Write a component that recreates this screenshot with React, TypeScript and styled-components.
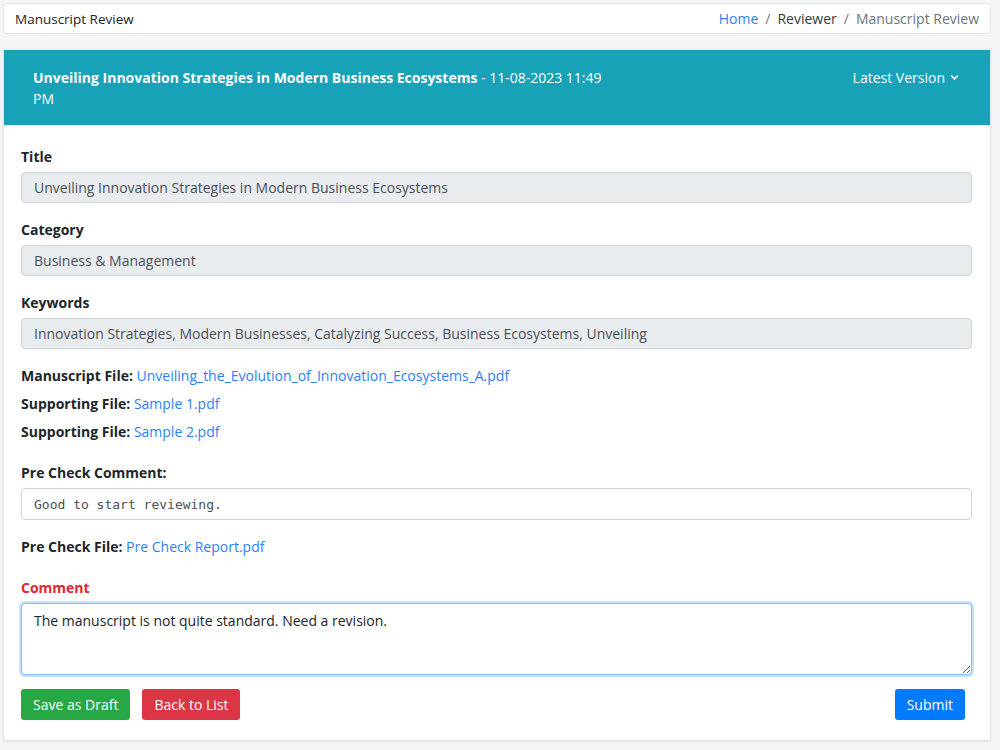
import React from "react";
import styled, { createGlobalStyle } from "styled-components";
import { ChevronDown } from "lucide-react";

const GlobalStyle = createGlobalStyle`
  * { box-sizing: border-box; }
  body {
    margin: 0;
    background: #f4f5f7;
    font-family: "Open Sans", "Noto Sans", sans-serif;
    font-size: 14px;
    color: #212529;
  }
`;

const Page = styled("div")`
  padding: 3px 9px 10px 3px;
  display: flex;
  flex-direction: column;
  gap: 15px;
`;

const TopBar = styled("div")`
  display: flex;
  align-items: center;
  justify-content: space-between;
  height: 31px;
  padding: 0 11px 0 11px;
  background: #fff;
  border: 1px solid #e5e7eb;
  border-radius: 4px;
`;

const PageTitle = styled("span")`
  font-size: 13.5px;
  color: #212529;
`;

const Crumbs = styled("nav")`
  display: flex;
  align-items: center;
  gap: 7px;
  font-size: 14px;
  color: #6c757d;
`;

const Crumb = styled("span")<{ kind: "link" | "strong" | "plain" }>`
  color: ${({ kind }) =>
    kind === "link" ? "#2d7ff9" : kind === "strong" ? "#343a40" : "#6c757d"};
`;

const Card = styled("div")`
  background: #fff;
  border: 1px solid #e3e6ea;
  box-shadow: 0 1px 2px rgba(0, 0, 0, 0.08);
`;

const CardHeader = styled("div")`
  display: flex;
  justify-content: space-between;
  align-items: flex-start;
  background: #17a2b8;
  color: #fff;
  padding: 17px 30px 16px 29px;
  font-size: 14px;
  line-height: 21px;
`;

const HeaderTitle = styled("div")`
  max-width: 590px;
  b {
    font-weight: 700;
  }
`;

const VersionToggle = styled("div")`
  display: flex;
  align-items: center;
  gap: 4px;
  white-space: nowrap;
`;

const CardBody = styled("div")`
  padding: 21px 18px 20px 17px;
  display: flex;
  flex-direction: column;
`;

const Field = styled("div")`
  display: flex;
  flex-direction: column;
  gap: 5px;
  margin-bottom: 16px;
`;

const Label = styled("label")<{ danger?: boolean }>`
  font-weight: 700;
  font-size: 14px;
  line-height: 21px;
  color: ${({ danger }) => (danger ? "#e3262f" : "#212529")};
`;

const ReadOnlyInput = styled("div")<{ mono?: boolean; plain?: boolean }>`
  height: ${({ plain }) => (plain ? "32px" : "31px")};
  display: flex;
  align-items: center;
  padding: 0 12px;
  border: 1px solid #ced4da;
  border-radius: 4px;
  background: ${({ plain }) => (plain ? "#fff" : "#e9ecef")};
  color: #495057;
  font-family: ${({ mono }) =>
    mono ? '"DejaVu Sans Mono", "Liberation Mono", monospace' : "inherit"};
  font-size: ${({ mono }) => (mono ? "13px" : "14px")};
`;

const FileList = styled("div")`
  display: flex;
  flex-direction: column;
  gap: 7px;
  margin: 0 0 20px;
`;

const FileRow = styled("div")`
  line-height: 21px;
  font-size: 14px;
  b {
    font-weight: 700;
  }
  a {
    color: #2d7ff9;
    text-decoration: none;
  }
`;

const CommentBox = styled("textarea")`
  height: 72px;
  padding: 7px 12px 5px;
  border: 1px solid #80bdff;
  border-radius: 4px;
  box-shadow: 0 0 0 2px rgba(128, 189, 255, 0.45);
  font-family: inherit;
  font-size: 14px;
  color: #212529;
  outline: none;
  resize: vertical;
`;

const Actions = styled("div")`
  display: flex;
  align-items: center;
  gap: 12px;
  margin-top: -2px;
  padding-right: 7px;
`;

const Spacer = styled("div")`
  flex: 1;
`;

const Button = styled("button")<{ tone: "success" | "danger" | "primary" }>`
  height: 31px;
  padding: 0 12px;
  border: none;
  border-radius: 3px;
  font-family: inherit;
  font-size: 14px;
  color: #fff;
  background: ${({ tone }) =>
    tone === "success" ? "#28a745" : tone === "danger" ? "#dc3545" : "#007bff"};
  cursor: pointer;
`;

function App() {
  return (
    <Page>
      <GlobalStyle />
      <TopBar>
        <PageTitle>Manuscript Review</PageTitle>
        <Crumbs>
          <Crumb kind="link">Home</Crumb>
          <span>/</span>
          <Crumb kind="strong">Reviewer</Crumb>
          <span>/</span>
          <Crumb kind="plain">Manuscript Review</Crumb>
        </Crumbs>
      </TopBar>
      <Card>
        <CardHeader>
          <HeaderTitle>
            <b>Unveiling Innovation Strategies in Modern Business Ecosystems</b> - 11-08-2023 11:49 PM
          </HeaderTitle>
          <VersionToggle>
            Latest Version <ChevronDown size={11} strokeWidth={3.5} />
          </VersionToggle>
        </CardHeader>
        <CardBody>
          <Field>
            <Label>Title</Label>
            <ReadOnlyInput>Unveiling Innovation Strategies in Modern Business Ecosystems</ReadOnlyInput>
          </Field>
          <Field>
            <Label>Category</Label>
            <ReadOnlyInput>Business &amp; Management</ReadOnlyInput>
          </Field>
          <Field>
            <Label>Keywords</Label>
            <ReadOnlyInput>
              Innovation Strategies, Modern Businesses, Catalyzing Success, Business Ecosystems, Unveiling
            </ReadOnlyInput>
          </Field>
          <FileList>
            <FileRow>
              <b>Manuscript File:</b> <a href="#">Unveiling_the_Evolution_of_Innovation_Ecosystems_A.pdf</a>
            </FileRow>
            <FileRow>
              <b>Supporting File:</b> <a href="#">Sample 1.pdf</a>
            </FileRow>
            <FileRow>
              <b>Supporting File:</b> <a href="#">Sample 2.pdf</a>
            </FileRow>
          </FileList>
          <Field>
            <Label>Pre Check Comment:</Label>
            <ReadOnlyInput mono plain>Good to start reviewing.</ReadOnlyInput>
          </Field>
          <FileList>
            <FileRow>
              <b>Pre Check File:</b> <a href="#">Pre Check Report.pdf</a>
            </FileRow>
          </FileList>
          <Field>
            <Label danger>Comment</Label>
            <CommentBox defaultValue="The manuscript is not quite standard. Need a revision." />
          </Field>
          <Actions>
            <Button tone="success">Save as Draft</Button>
            <Button tone="danger">Back to List</Button>
            <Spacer />
            <Button tone="primary">Submit</Button>
          </Actions>
        </CardBody>
      </Card>
    </Page>
  );
}

export default App;
